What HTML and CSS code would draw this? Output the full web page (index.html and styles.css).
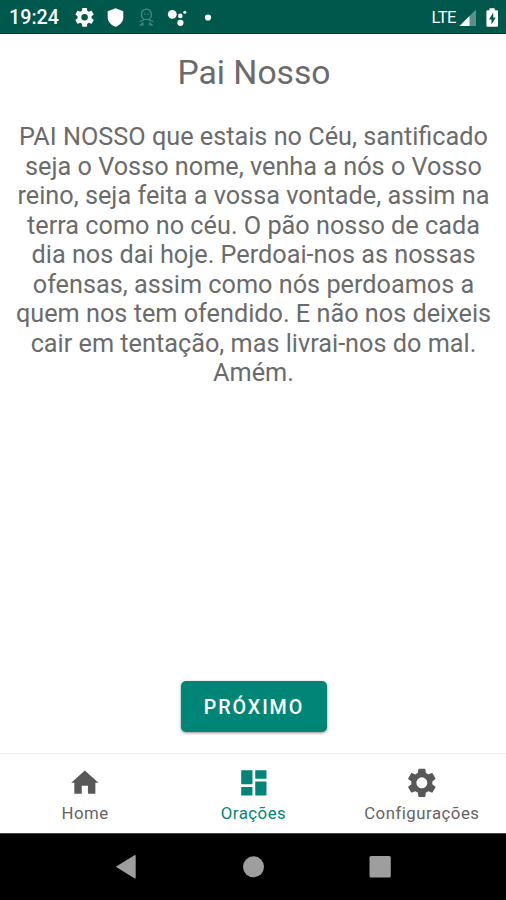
FILE: index.html
```html
<!DOCTYPE html>
<html lang="pt">
<head>
<meta charset="utf-8">
<title>Pai Nosso</title>
<link rel="stylesheet" href="styles.css">
</head>
<body>
<div class="screen">
  <header class="status">
    <span class="clock">19:24</span>
    <svg class="status-icons" width="140" height="34" viewBox="74 0 140 34" fill="#fff">
      <path transform="translate(73.3 6) scale(.94)" d="M19.43 12.98c.04-.32.07-.64.07-.98s-.03-.66-.07-.98l2.11-1.65c.19-.15.24-.42.12-.64l-2-3.46c-.12-.22-.39-.3-.61-.22l-2.49 1c-.52-.4-1.08-.73-1.69-.98l-.38-2.65A.488.488 0 0 0 14 2h-4c-.25 0-.46.18-.49.42l-.38 2.65c-.61.25-1.17.59-1.69.98l-2.49-1c-.23-.09-.49 0-.61.22l-2 3.46c-.13.22-.07.49.12.64l2.11 1.65c-.04.32-.07.65-.07.98s.03.66.07.98l-2.11 1.65c-.19.15-.24.42-.12.64l2 3.46c.12.22.39.3.61.22l2.49-1c.52.4 1.08.73 1.69.98l.38 2.65c.03.24.24.42.49.42h4c.25 0 .46-.18.49-.42l.38-2.65c.61-.25 1.17-.59 1.69-.98l2.49 1c.23.09.49 0 .61-.22l2-3.46c.12-.22.07-.49-.12-.64l-2.11-1.65zM12 15.5a3.5 3.5 0 1 1 0-7 3.5 3.5 0 0 1 0 7z"/>
      <path d="M115.500 8.200l7.800 3v6c0 4.400-3.300 8-7.800 9.600-4.500-1.600-7.800-5.200-7.800-9.600v-6z"/>
      <g fill="none" stroke="#fff" stroke-width="1.200" opacity=".3">
        <path d="M141.500 16.500v-2.500a4.900 4.900 0 0 1 9.800 0v2.500l-2.400 3h-5z"/>
        <path d="M144.200 14.200h1.300m2 0h1.300M144 20l-4.500 1.500M149 20l4.500 1.500M143.500 22.500l-3 2.500h3.500m5-2.500l3 2.500h-3.500"/>
      </g>
      <circle cx="172.300" cy="14.300" r="4.400"/>
      <circle cx="180.300" cy="15.900" r="2.300"/>
      <circle cx="184.800" cy="12.300" r="1.500"/>
      <circle cx="180.400" cy="22.800" r="3.100"/>
      <circle cx="208" cy="17.500" r="3.100"/>
    </svg>
    <span class="network">LTE</span>
    <svg class="power-icons" width="42" height="34" viewBox="458 0 42 34" fill="#fff">
      <path d="M476 9.500v16.500h-16.500z" opacity=".35"/>
      <path d="M469.500 16v10h-10z"/>
      <path fill-rule="evenodd" d="M489.500 8.200h5.200v2h2.300q1 0 1 1v14.600q0 1-1 1h-9.600q-1 0-1-1v-14.600q0-1 1-1h2.100zM493.200 12.600l-4.200 7h2.500v4.800l4.200-7h-2.500z"/>
    </svg>
  </header>

  <main class="content">
    <h1 class="title">Pai Nosso</h1>
    <p class="prayer">PAI NOSSO que estais no Céu, santificado<br>
      seja o Vosso nome, venha a nós o Vosso<br>
      reino, seja feita a vossa vontade, assim na<br>
      terra como no céu. O pão nosso de cada<br>
      dia nos dai hoje. Perdoai-nos as nossas<br>
      ofensas, assim como nós perdoamos a<br>
      quem nos tem ofendido. E não nos deixeis<br>
      cair em tentação, mas livrai-nos do mal.<br>
      Amém.</p>
    <button class="next" type="button">PRÓXIMO</button>
  </main>

  <nav class="tabs">
    <a class="tab">
      <svg class="tab-icon" viewBox="0 0 24 24"><path d="M9.800 19.700v-5.700h4.400v5.700h5.300v-7.700h2.200L12 3.200 2.300 12h2.200v7.700z"/></svg>
      <span>Home</span>
    </a>
    <a class="tab tab-active">
      <svg class="tab-icon" viewBox="0 0 24 24"><path d="M3 13h8V3H3v10zm0 8h8v-6H3v6zm10 0h8V11h-8v10zm0-18v6h8V3h-8z"/></svg>
      <span>Orações</span>
    </a>
    <a class="tab">
      <svg class="tab-icon" viewBox="0 0 24 24"><path d="M19.430 12.980c.04-.32.07-.64.07-.98s-.03-.66-.07-.98l2.110-1.650c.19-.15.24-.42.12-.64l-2-3.460c-.12-.22-.39-.3-.61-.22l-2.490 1c-.52-.4-1.080-.73-1.690-.98l-.38-2.650A.488.488 0 0 0 14 2h-4c-.25 0-.46.18-.49.42l-.38 2.650c-.61.25-1.170.59-1.690.98l-2.490-1c-.23-.09-.49 0-.61.22l-2 3.460c-.13.22-.07.49.12.64l2.110 1.650c-.04.32-.07.65-.07.98s.03.66.07.98l-2.110 1.650c-.19.15-.24.42-.12.64l2 3.460c.12.22.39.3.61.22l2.490-1c.52.4 1.080.73 1.690.98l.38 2.650c.03.24.24.42.49.42h4c.25 0 .46-.18.49-.42l.38-2.650c.61-.25 1.170-.59 1.690-.98l2.490 1c.23.09.49 0 .61-.22l2-3.460c.12-.22.07-.49-.12-.64l-2.110-1.650zM12 15.900a3.900 3.900 0 1 1 0-7.800 3.900 3.900 0 0 1 0 7.800z"/></svg>
      <span>Configurações</span>
    </a>
  </nav>

  <footer class="system">
    <svg width="506" height="66" viewBox="0 834 506 66" fill="#9e9e9e">
      <path d="M115.800 866.700l18.600-11.500q1.300-.7 1.300.8v21.400q0 1.500-1.300.8z"/>
      <circle cx="253.500" cy="866.800" r="10.500"/>
      <rect x="369.500" y="856" width="21.300" height="21.500" rx="1.500"/>
    </svg>
  </footer>
</div>
</body>
</html>
```
FILE: styles.css
```css
* { box-sizing: border-box; }

body {
  margin: 0;
  background: #fff;
  font-family: Roboto, "Liberation Sans", sans-serif;
}

.screen {
  display: flex;
  flex-direction: column;
  width: 506px;
  height: 900px;
  overflow: hidden;
}

.status {
  display: flex;
  align-items: center;
  flex: none;
  height: 34px;
  padding: 0 6px 0 9px;
  background: #00574b;
  border-bottom: 1px solid #003d2e;
  color: #fff;
}

.status svg { flex: none; }

.clock {
  width: 65px;
  font-size: 19.7px;
  font-weight: 500;
  line-height: 34px;
  padding-top: 2px;
}

.network {
  margin-left: auto;
  padding-top: 1px;
  font-size: 16.5px;
  letter-spacing: -0.5px;
}

.power-icons { margin-left: 2px; }

.content {
  display: flex;
  flex: 1;
  flex-direction: column;
  align-items: center;
  padding: 19px 0 21px 1px;
  color: #6b6b6b;
  text-align: center;
}

.title {
  margin: 0;
  padding-left: 1px;
  font-size: 33.7px;
  font-weight: 400;
  line-height: 40px;
}

.prayer {
  margin: 29px 0 0;
  font-size: 25.25px;
  line-height: 29.55px;
  white-space: nowrap;
}

.next {
  width: 146px;
  height: 51px;
  margin-top: auto;
  padding: 2px 0 0 1px;
  border: 0;
  border-radius: 5px;
  background: #008577;
  box-shadow: 0 1px 3px rgba(0, 0, 0, .45);
  color: #fff;
  font: 500 19.7px Roboto, sans-serif;
  letter-spacing: 1.9px;
}

.tabs {
  display: grid;
  grid-template-columns: repeat(3, 1fr);
  flex: none;
  height: 80px;
  padding-left: 1px;
  border-top: 1px solid #eee;
}

.tab {
  display: flex;
  flex-direction: column;
  align-items: center;
  padding-top: 11.5px;
  color: #646464;
  font-size: 16.8px;
  line-height: 20px;
  letter-spacing: .5px;
}

.tab span { margin-top: 4px; }

.tab-icon {
  width: 33.7px;
  height: 33.7px;
  fill: #585858;
}

.tab-active { color: #008577; }

.tab-active .tab-icon { fill: #008577; }

.system {
  flex: none;
  height: 67px;
  padding-top: 1px;
  border-top: 1px solid #444;
  background: #000;
}

.system svg { display: block; margin-top: -1px; }
```
